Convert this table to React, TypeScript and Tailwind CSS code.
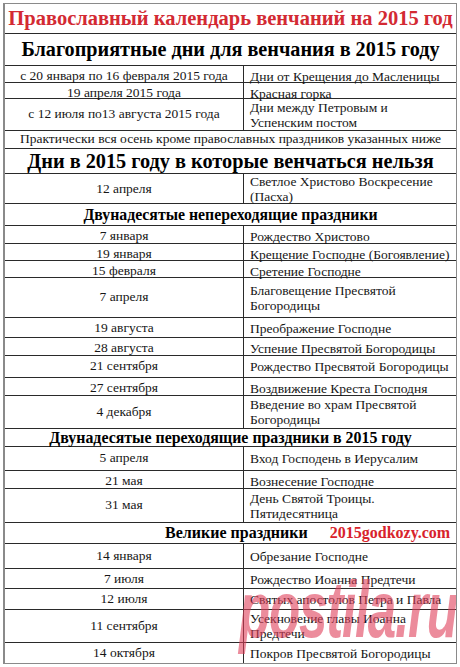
import React from 'react';

type Row =
  | { kind: 'title'; text: string; h: string }
  | { kind: 'head'; text: string; h: string; size: string }
  | { kind: 'full'; text: string; h: string }
  | { kind: 'pair'; left: string; right: string; h: string };

const rows: Row[] = [
  { kind: 'title', text: 'Православный календарь венчаний на 2015 год', h: 'h-[30px]' },
  { kind: 'head', text: 'Благоприятные дни для венчания в 2015 году', h: 'h-[32px]', size: 'text-[20.2px]' },
  { kind: 'pair', left: 'с 20 января по 16 февраля 2015 года', right: 'Дни от Крещения до Масленицы', h: 'h-[17px]' },
  { kind: 'pair', left: '19 апреля 2015 года', right: 'Красная горка', h: 'h-[16px]' },
  { kind: 'pair', left: 'с 12 июля по13 августа 2015 года', right: 'Дни между Петровым и\nУспенским постом', h: 'h-[32px]' },
  { kind: 'full', text: 'Практически вся осень кроме православных праздников указанных ниже', h: 'h-[18px]' },
  { kind: 'head', text: 'Дни в 2015 году в которые венчаться нельзя', h: 'h-[25px]', size: 'text-[20.3px]' },
  { kind: 'pair', left: '12 апреля', right: 'Светлое Христово Воскресение\n(Пасха)', h: 'h-[30px]' },
  { kind: 'head', text: 'Двунадесятые непереходящие праздники', h: 'h-[22px]', size: 'text-[15.8px]' },
  { kind: 'pair', left: '7 января', right: 'Рождество Христово', h: 'h-[18px]' },
  { kind: 'pair', left: '19 января', right: 'Крещение Господне (Богоявление)', h: 'h-[17px]' },
  { kind: 'pair', left: '15 февраля', right: 'Сретение Господне', h: 'h-[17px]' },
  { kind: 'pair', left: '7 апреля', right: 'Благовещение Пресвятой\nБогородицы', h: 'h-[40px]' },
  { kind: 'pair', left: '19 августа', right: 'Преображение Господне', h: 'h-[20px]' },
  { kind: 'pair', left: '28 августа', right: 'Успение Пресвятой Богородицы', h: 'h-[18px]' },
  { kind: 'pair', left: '21 сентября', right: 'Рождество Пресвятой Богородицы', h: 'h-[22px]' },
  { kind: 'pair', left: '27 сентября', right: 'Воздвижение Креста Господня', h: 'h-[18px]' },
  { kind: 'pair', left: '4 декабря', right: 'Введение во храм Пресвятой\nБогородицы', h: 'h-[33px]' },
  { kind: 'head', text: 'Двунадесятые переходящие праздники в 2015 году', h: 'h-[18px]', size: 'text-[15.9px]' },
  { kind: 'pair', left: '5 апреля', right: 'Вход Господень  в Иерусалим', h: 'h-[24px]' },
  { kind: 'pair', left: '21 мая', right: 'Вознесение Господне', h: 'h-[18px]' },
  { kind: 'pair', left: '31 мая', right: 'День Святой Троицы.\nПятидесятница', h: 'h-[34px]' },
];

const great: { left: string; right: string; h: string }[] = [
  { left: '14 января', right: 'Обрезание Господне', h: 'h-[25px]' },
  { left: '7 июля', right: 'Рождество Иоанна Предтечи', h: 'h-[20px]' },
  { left: '12 июля', right: 'Святых апостолов Петра и Павла', h: 'h-[21px]' },
  { left: '11 сентября', right: 'Усекновение главы Иоанна\nПредтечи', h: 'h-[33px]' },
  { left: '14 октября', right: 'Покров Пресвятой Богородицы', h: 'h-[20px]' },
];

const Pair = ({ left, right, h, last }: { left: string; right: string; h: string; last?: boolean }) => (
  <div className={`grid grid-cols-[239px_1fr] ${h} ${last ? '' : 'border-b border-[#2a2a2a]'}`}>
    <div className="flex items-center justify-center border-r border-[#2a2a2a] text-center whitespace-nowrap">{left}</div>
    <div className="flex items-center pl-[6px] pr-1 leading-[15px] whitespace-pre-line">{right}</div>
  </div>
);

export default function App() {
  return (
    <div className="w-[460px] h-[667px] bg-white p-[3px] pb-0 text-[13.5px] text-[#161616] [font-family:'Liberation_Serif',serif]">
      <div className="relative flex flex-col border border-[#8a8a8a] border-l-2 overflow-hidden">
        {rows.map((r, i) => {
          if (r.kind === 'title')
            return (
              <div key={i} className={`${r.h} flex items-center justify-center border-b border-[#2a2a2a] text-[20.5px] font-bold text-[#d32a33] leading-none whitespace-nowrap`}>
                {r.text}
              </div>
            );
          if (r.kind === 'head')
            return (
              <div key={i} className={`${r.h} flex items-center justify-center border-b border-[#2a2a2a] ${r.size} font-bold text-black leading-none whitespace-nowrap`}>
                {r.text}
              </div>
            );
          if (r.kind === 'full')
            return (
              <div key={i} className={`${r.h} flex items-center justify-center border-b border-[#2a2a2a] whitespace-nowrap`}>
                {r.text}
              </div>
            );
          return <Pair key={i} left={r.left} right={r.right} h={r.h} />;
        })}
        <div className="h-[21px] flex items-center border-b border-[#2a2a2a] font-bold leading-none">
          <span className="ml-[160px] text-[16px] text-black">Великие праздники</span>
          <span className="ml-[22px] text-[16px] text-[#d8232c]">2015godkozy.com</span>
        </div>
        {great.map((g, i) => (
          <Pair key={i} left={g.left} right={g.right} h={g.h} last={i === great.length - 1} />
        ))}
        <div className="absolute left-[234px] top-[566px] pointer-events-none select-none">
          <span className="block origin-left scale-x-[0.64] text-[80px] font-bold italic leading-none tracking-[-2px] text-[#e0405a]/60 [font-family:'Liberation_Sans',sans-serif]">
            postila.ru
          </span>
        </div>
      </div>
    </div>
  );
}
